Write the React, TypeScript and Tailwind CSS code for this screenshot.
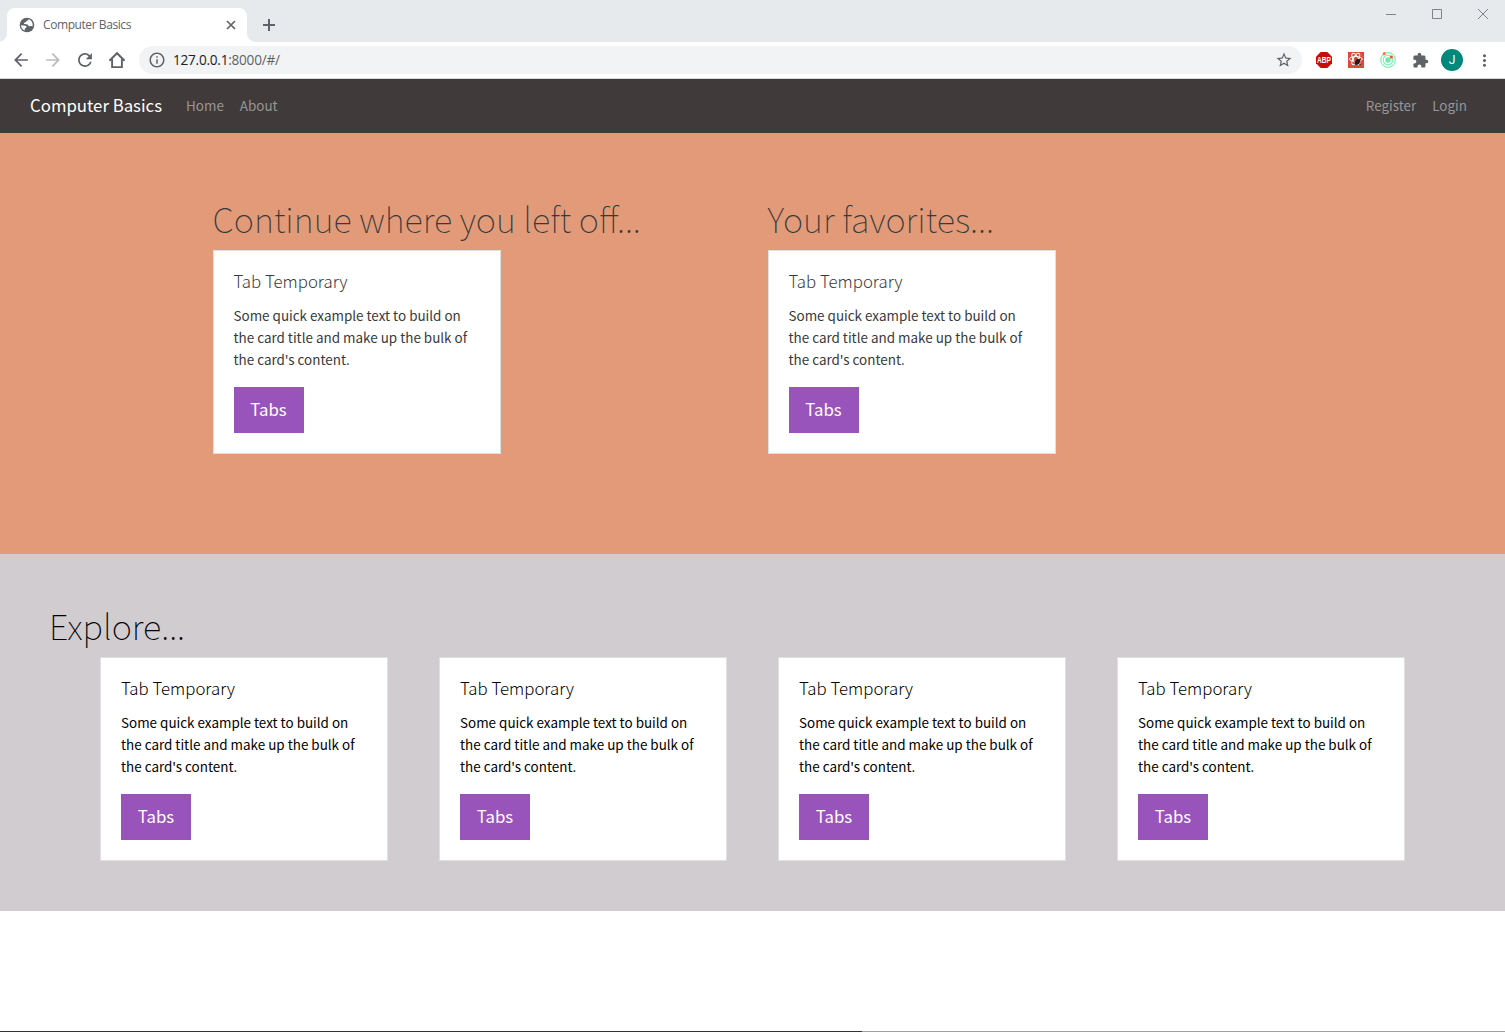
import {
  MdArrowBack,
  MdArrowForward,
  MdExtension,
  MdMoreVert,
  MdOutlineInfo,
  MdRefresh,
  MdStarBorder,
} from "react-icons/md";

function GlobeIcon() {
  return (
    <svg width="16" height="16" viewBox="0 0 16 16" className="shrink-0">
      <circle cx="8" cy="8" r="7.3" fill="#5f6368" />
      <path
        d="M9.4 2.2c.2 1-.6 1.3-1.4 1.6-.9.3-.6 1-1.4 1.4-.8.4-1.7.3-1.7 1.1 0 .8.9.9 1.8.9 1.2 0 2.3.1 2.5 1 .2.9.9 1 1.7.9.9-.1 1.4.3 2.7.2C14.2 6 12.4 2.9 9.4 2.2zM2.1 7.9c1.1.2 1.9.6 3 .7 1.3.1 2.5.5 2.5 1.5 0 .9-1.5.8-1.7 1.7-.1.7-.2 1.2-.6 1.6C3.2 12.3 2 10.4 2.1 7.9z"
        fill="#fff"
      />
    </svg>
  );
}

function HomeIcon() {
  return (
    <svg width="18" height="18" viewBox="0 0 18 18" fill="none" stroke="#5f6368" strokeWidth="1.9">
      <path d="M1.4 9.7L9 2.2l7.6 7.5M4.1 8v8.1h9.8V8" />
    </svg>
  );
}

function AdblockIcon() {
  return (
    <svg width="16" height="16" viewBox="0 0 16 16" className="overflow-visible">
      <path d="M4.7 0h6.6L16 4.7v6.6L11.3 16H4.7L0 11.3V4.7z" fill="#c70d0c" />
      <text
        x="8"
        y="11.1"
        textAnchor="middle"
        textLength="14"
        lengthAdjust="spacingAndGlyphs"
        fill="#fff"
        className="font-['Liberation_Sans',sans-serif] text-[8.6px] font-bold"
      >
        ABP
      </text>
    </svg>
  );
}

function ReactDebugIcon() {
  return (
    <svg width="16" height="16" viewBox="0 0 16 16">
      <path d="M0 0h16v16H0z" fill="#dc4a38" />
      <g fill="none" stroke="#fff" strokeWidth="1">
        <ellipse cx="7.8" cy="7" rx="6.4" ry="2.5" />
        <ellipse cx="7.8" cy="7" rx="6.4" ry="2.5" transform="rotate(60 7.8 7)" />
        <ellipse cx="7.8" cy="7" rx="6.4" ry="2.5" transform="rotate(120 7.8 7)" />
      </g>
      <ellipse cx="9.4" cy="10" rx="2.2" ry="3.2" fill="#2a1512" transform="rotate(35 9.4 10)" />
      <path d="M6 9l7 4M7 12.5l5.5-5.5M8 7l4.5 1" stroke="#2a1512" strokeWidth=".8" />
    </svg>
  );
}

function OrbitIcon() {
  return (
    <svg width="16" height="16" viewBox="0 0 16 16" fill="none">
      <circle cx="8" cy="8" r="7.3" stroke="#7ff0b4" strokeWidth="1.2" />
      <circle cx="8" cy="8" r="4.8" stroke="#7ff0b4" strokeWidth="1.2" />
      <circle cx="8" cy="8" r="2.7" fill="#6deba8" />
      <circle cx="4.3" cy="1.7" r="1.6" fill="#f9783c" />
      <circle cx="11.3" cy="5" r="1.6" fill="#f4512c" />
    </svg>
  );
}

function BrowserChrome() {
  return (
    <header className="font-['Open_Sans',sans-serif]">
      <div className="flex h-[42px] items-start bg-[#e6eaed]">
        <div className="relative mt-2 ml-[7px] flex h-[34px] w-60 items-center rounded-t-lg bg-white pr-[11px] pl-3 text-[#5f6368]">
          <div className="absolute bottom-0 -left-2 h-2 w-2 bg-[radial-gradient(circle_at_0_0,#e6eaed_7.5px,#fff_8px)]" />
          <div className="absolute -right-2 bottom-0 h-2 w-2 bg-[radial-gradient(circle_at_100%_0,#e6eaed_7.5px,#fff_8px)]" />
          <GlobeIcon />
          <span className="ml-2 grow text-[12px] leading-4 tracking-[-0.42px]">Computer Basics</span>
          <svg width="10" height="10" viewBox="0 0 10 10" stroke="#5f6368" strokeWidth="1.7">
            <path d="M1 1l8 8M9 1l-8 8" />
          </svg>
        </div>
        <svg className="mt-[19px] ml-4" width="12" height="12" viewBox="0 0 12 12" stroke="#5f6368" strokeWidth="2">
          <path d="M6 0v12M0 6h12" />
        </svg>
        <svg
          className="mt-2 mr-4 ml-auto"
          width="104"
          height="12"
          viewBox="0 0 104 12"
          fill="none"
          stroke="#7f8387"
          strokeWidth="1"
        >
          <path d="M1 6.5h10M47.5 1.5h9v9h-9zM93 1l10 10M103 1L93 11" />
        </svg>
      </div>
      <div className="flex h-9 items-center text-[#5f6368]">
        <div className="flex w-[139px] items-center gap-3.5 pl-3">
          <MdArrowBack size={18} className="scale-[1.15]" />
          <MdArrowForward size={18} className="scale-[1.15] text-[#babcbe]" />
          <MdRefresh size={18} className="scale-[1.15]" />
          <HomeIcon />
        </div>
        <div className="flex h-7 w-[1163px] items-center rounded-full bg-[#f1f3f4] pr-[9px] pl-[9px]">
          <MdOutlineInfo size={18} />
          <span className="ml-[7px] grow text-[13.6px] leading-5 tracking-[-0.24px]">
            <span className="text-[#202124]">127.0.0.1</span>:8000/#/
          </span>
          <MdStarBorder size={18} />
        </div>
        <div className="ml-3.5 flex items-center gap-4">
          <AdblockIcon />
          <ReactDebugIcon />
          <OrbitIcon />
          <MdExtension size={17} />
        </div>
        <div className="ml-3 flex size-[22px] items-center justify-center rounded-full bg-[#00897b] font-[Roboto,sans-serif] text-xs text-white">
          J
        </div>
        <MdMoreVert size={19} className="ml-3" />
      </div>
      <div className="h-px bg-[#d5d7d9]" />
    </header>
  );
}

function TabCard() {
  return (
    <article className="w-72 border border-[#dfdfdf] bg-white px-5 pt-[19px] pb-5">
      <h4 className="mb-3 text-[16.8px] leading-[22px] font-light">Tab Temporary</h4>
      <p className="mb-[17px] text-[13.45px] leading-[22px]">
        Some quick example text to build on the card title and make up the bulk of the card's content.
      </p>
      <button className="block h-[46px] w-[70px] bg-[#9954bb] text-[16.8px] text-white">Tabs</button>
    </article>
  );
}

function Heading({ children }: { children: string }) {
  return <h1 className="mb-2 h-[45px] text-[34.4px] leading-[43px] font-thin whitespace-nowrap">{children}</h1>;
}

export default function App() {
  return (
    <div className="flex h-[1032px] w-[1505px] flex-col overflow-hidden bg-white">
      <BrowserChrome />
      <div className="flex grow flex-col font-['Noto_Sans_CJK_SC',sans-serif]">
        <nav className="flex h-[54px] items-center bg-[#403a3a] px-[30px] text-[13.45px] text-[#999595]">
          <span className="mr-6 text-[16.8px] text-white">Computer Basics</span>
          <a className="mr-4 pb-0.5">Home</a>
          <a className="pb-0.5">About</a>
          <a className="mr-4 ml-auto pb-0.5">Register</a>
          <a className="mr-2 pb-0.5">Login</a>
        </nav>
        <section className="h-[421px] bg-[#e29a79] pt-16 text-[#373a3c]">
          <div className="mx-auto grid w-[1110px] grid-cols-2">
            <div className="pl-[15px]">
              <Heading>Continue where you left off...</Heading>
              <TabCard />
            </div>
            <div className="pl-[15px]">
              <Heading>Your favorites...</Heading>
              <TabCard />
            </div>
          </div>
        </section>
        <section className="h-[357px] bg-[#d1ccd0] px-[50px] pt-[50px] text-black">
          <div className="-ml-px">
            <Heading>Explore...</Heading>
          </div>
          <div className="flex justify-between px-[50px]">
            <TabCard />
            <TabCard />
            <TabCard />
            <TabCard />
          </div>
        </section>
        <div className="mt-auto flex h-px">
          <div className="w-[862px] bg-[#333]" />
          <div className="grow bg-[#a0a0a0]" />
        </div>
      </div>
    </div>
  );
}
